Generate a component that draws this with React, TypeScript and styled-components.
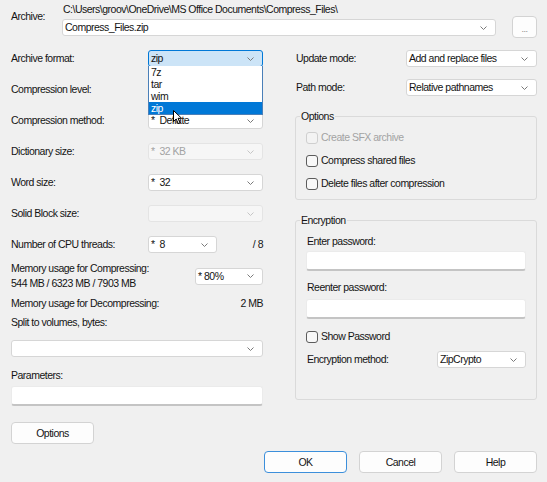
import React from "react";
import styled, { createGlobalStyle, css } from "styled-components";

const GlobalStyle = createGlobalStyle`
  html, body { margin: 0; padding: 0; background: #f0f0f0; }
  body {
    font-family: "Liberation Sans", Arial, sans-serif;
    font-size: 10.5px;
    letter-spacing: -0.5px;
    color: #141414;
  }
  * { box-sizing: border-box; }
`;

const Dialog = styled.div`
  width: 547px;
  height: 482px;
  padding: 3px 10px 0 11px;
  display: flex;
  flex-direction: column;
  overflow: hidden;
`;

/* ---------- generic controls ---------- */

const ComboBox = styled.div<{ $disabled?: boolean; $focused?: boolean; $width?: number }>`
  position: relative;
  display: flex;
  align-items: center;
  justify-content: space-between;
  height: 17px;
  width: ${(p) => (p.$width ? `${p.$width}px` : "100%")};
  padding: 0 8px 0 2px;
  background: #ffffff;
  border: 1px solid #d6d6d6;
  border-radius: 3px;
  line-height: 15px;
  white-space: pre;
  ${(p) =>
    p.$disabled &&
    css`
      background: #f6f6f6;
      border-color: #e4e4e4;
      color: #a3a3a3;
    `}
  ${(p) =>
    p.$focused &&
    css`
      background: #cce4f7;
      border-color: #0078d7;
    `}
`;

const ChevronSvg = styled.svg<{ $disabled?: boolean }>`
  flex: none;
  width: 7px;
  height: 4px;
  stroke: ${(p) => (p.$disabled ? "#c6c6c6" : "#7a7a7a")};
  fill: none;
`;

const Chevron = ({ disabled }: { disabled?: boolean }) => (
  <ChevronSvg $disabled={disabled} viewBox="0 0 7 4">
    <polyline points="0.5,0.5 3.5,3.5 6.5,0.5" strokeWidth="1" />
  </ChevronSvg>
);

type ComboProps = {
  value?: string;
  width?: number;
  disabled?: boolean;
  focused?: boolean;
  className?: string;
  children?: React.ReactNode;
};

const Combo = ({ value, width, disabled, focused, className, children }: ComboProps) => (
  <ComboBox className={className} $width={width} $disabled={disabled} $focused={focused}>
    <span>{value}</span>
    <Chevron disabled={disabled} />
    {children}
  </ComboBox>
);

const TextInput = styled.div`
  height: 20px;
  width: 100%;
  background: #ffffff;
  border: 1px solid #ebebeb;
  border-bottom: 2px solid #c4c4c4;
  border-radius: 3px;
`;

const Button = styled.button<{ $default?: boolean }>`
  width: 83px;
  height: 22px;
  padding: 0;
  font: inherit;
  letter-spacing: inherit;
  color: #141414;
  background: #fdfdfd;
  border: 1px solid #d3d3d3;
  border-radius: 4px;
  ${(p) =>
    p.$default &&
    css`
      border-color: #3c8fdb;
    `}
`;

const Label = styled.span<{ $muted?: boolean }>`
  line-height: 15px;
  white-space: nowrap;
  color: ${(p) => (p.$muted ? "#a3a3a3" : "inherit")};
`;

/* ---------- archive section ---------- */

const ArchiveGrid = styled.div`
  display: grid;
  grid-template-columns: 51px 434px 1fr;
  grid-template-rows: 13px 22px;
`;

const ArchiveLabel = styled(Label)`
  grid-row: 1 / span 2;
  grid-column: 1;
  align-self: start;
  margin-top: 6px;
`;

const PathText = styled.div`
  grid-row: 1;
  grid-column: 2;
  line-height: 13px;
  padding-left: 1px;
  white-space: nowrap;
`;

const ArchiveCombo = styled(Combo)`
  grid-row: 2;
  grid-column: 2;
  align-self: start;
  margin-top: 3px;
`;

const BrowseButton = styled(Button)`
  grid-row: 2;
  grid-column: 3;
  justify-self: end;
  width: 25px;
  height: 22px;
  color: #8a8a8a;
  font-size: 9px;
  padding-top: 3px;
`;

/* ---------- main area ---------- */

const Main = styled.div`
  display: flex;
  gap: 32px;
  margin-top: 12px;
`;

const LeftColumn = styled.div`
  width: 252px;
  display: flex;
  flex-direction: column;
`;

const RightColumn = styled.div`
  width: 242px;
  display: flex;
  flex-direction: column;
`;

const FormGrid = styled.div<{ $labelWidth: number; $gap: number }>`
  display: grid;
  grid-template-columns: ${(p) => p.$labelWidth}px 1fr;
  grid-auto-rows: 17px;
  row-gap: ${(p) => p.$gap}px;
  align-items: center;
`;

const RightLabel = styled(Label)`
  padding-left: 1px;
`;

const ThreadsCell = styled.div`
  display: flex;
  align-items: center;
  justify-content: space-between;
`;

const SpreadRow = styled.div<{ $top: number }>`
  display: flex;
  align-items: center;
  justify-content: space-between;
  margin-top: ${(p) => p.$top}px;
  line-height: 15px;
`;

const TwoLines = styled.div`
  display: flex;
  flex-direction: column;
  line-height: 15px;
  white-space: nowrap;
`;

const Spaced = styled.div<{ $top: number }>`
  margin-top: ${(p) => p.$top}px;
  display: flex;
  flex-direction: column;
`;

const FormatCell = styled.div`
  position: relative;
`;

const DropList = styled.ul`
  position: absolute;
  top: 100%;
  left: -1px;
  right: -1px;
  margin: 0;
  padding: 0;
  list-style: none;
  background: #ffffff;
  border: 1px solid #4a7fb8;
  border-top: none;
  z-index: 5;
  color: #141414;
`;

const DropItem = styled.li<{ $selected?: boolean }>`
  height: 12px;
  line-height: 12px;
  padding-left: 2px;
  ${(p) =>
    p.$selected &&
    css`
      background: #0078d7;
      color: #ffffff;
    `}
`;

const CursorSvg = styled.svg`
  position: absolute;
  left: 24px;
  top: 59px;
  width: 10px;
  height: 15px;
  z-index: 6;
`;

/* ---------- group boxes ---------- */

const GroupBox = styled.section<{ $top: number; $bottom: number }>`
  margin-top: ${(p) => p.$top}px;
  border: 1px solid #dadada;
  border-radius: 3px;
  padding: 0 10px ${(p) => p.$bottom}px;
  display: flex;
  flex-direction: column;
`;

const GroupTitle = styled.div`
  align-self: flex-start;
  margin: -7px 0 0 -6px;
  padding: 0 1px;
  line-height: 13px;
  background: #f0f0f0;
`;

const CheckList = styled.div`
  display: flex;
  flex-direction: column;
  gap: 8px;
  margin-top: 7px;
`;

const CheckRow = styled.label<{ $top?: number }>`
  display: flex;
  align-items: center;
  gap: 3px;
  height: 15px;
  margin-top: ${(p) => p.$top ?? 0}px;
`;

const CheckBox = styled.span<{ $disabled?: boolean }>`
  width: 12px;
  height: 12px;
  border-radius: 3px;
  border: 1px solid ${(p) => (p.$disabled ? "#cfcfcf" : "#5c5c5c")};
  background: ${(p) => (p.$disabled ? "#f3f3f3" : "#f8f8f8")};
`;

const FieldLabel = styled(Label)<{ $top: number }>`
  display: block;
  padding-left: 1px;
  margin-top: ${(p) => p.$top}px;
`;

const FieldInput = styled(TextInput)<{ $top: number }>`
  margin-top: ${(p) => p.$top}px;
`;

/* ---------- bottom ---------- */

const ButtonRow = styled.div`
  display: flex;
  justify-content: flex-end;
  gap: 12px;
  margin-top: 7px;
`;

const Check = ({ label, disabled, top }: { label: string; disabled?: boolean; top?: number }) => (
  <CheckRow $top={top}>
    <CheckBox $disabled={disabled} />
    <Label $muted={disabled}>{label}</Label>
  </CheckRow>
);

export default function App() {
  return (
    <>
      <GlobalStyle />
      <Dialog>
        <ArchiveGrid>
          <ArchiveLabel>Archive:</ArchiveLabel>
          <PathText>C:\Users\groov\OneDrive\MS Office Documents\Compress_Files\</PathText>
          <ArchiveCombo value="Compress_Files.zip" />
          <BrowseButton>...</BrowseButton>
        </ArchiveGrid>

        <Main>
          <LeftColumn>
            <FormGrid $labelWidth={137} $gap={14}>
              <Label>Archive format:</Label>
              <FormatCell>
                <Combo value="zip" focused>
                  <DropList>
                    <DropItem>7z</DropItem>
                    <DropItem>tar</DropItem>
                    <DropItem>wim</DropItem>
                    <DropItem $selected>zip</DropItem>
                  </DropList>
                  <CursorSvg viewBox="0 0 10 15">
                    <path
                      d="M0.5 0.5 L0.5 11.5 L3.2 9 L5.2 13.6 L7 12.8 L5 8.3 L8.6 8.3 Z"
                      fill="#ffffff"
                      stroke="#000000"
                      strokeWidth="1"
                      strokeLinejoin="round"
                    />
                  </CursorSvg>
                </Combo>
              </FormatCell>

              <Label>Compression level:</Label>
              <Combo value="" />

              <Label>Compression method:</Label>
              <Combo value="*  Deflate" />

              <Label>Dictionary size:</Label>
              <Combo value="*  32 KB" disabled />

              <Label>Word size:</Label>
              <Combo value="*  32" />

              <Label>Solid Block size:</Label>
              <Combo value="" disabled />

              <Label>Number of CPU threads:</Label>
              <ThreadsCell>
                <Combo value="*  8" width={69} />
                <Label>/ 8</Label>
              </ThreadsCell>
            </FormGrid>

            <SpreadRow $top={8}>
              <TwoLines>
                <span>Memory usage for Compressing:</span>
                <span>544 MB / 6323 MB / 7903 MB</span>
              </TwoLines>
              <Combo value="* 80%" width={68} />
            </SpreadRow>

            <SpreadRow $top={5}>
              <Label>Memory usage for Decompressing:</Label>
              <Label>2 MB</Label>
            </SpreadRow>

            <Spaced $top={4}>
              <Label>Split to volumes, bytes:</Label>
            </Spaced>
            <Spaced $top={10}>
              <Combo value="" />
            </Spaced>

            <Spaced $top={11}>
              <Label>Parameters:</Label>
            </Spaced>
            <Spaced $top={3}>
              <TextInput />
            </Spaced>

            <Spaced $top={16}>
              <Button>Options</Button>
            </Spaced>
          </LeftColumn>

          <RightColumn>
            <FormGrid $labelWidth={111} $gap={12}>
              <RightLabel>Update mode:</RightLabel>
              <Combo value="Add and replace files" />
              <RightLabel>Path mode:</RightLabel>
              <Combo value="Relative pathnames" />
            </FormGrid>

            <GroupBox $top={20} $bottom={8}>
              <GroupTitle>Options</GroupTitle>
              <CheckList>
                <Check label="Create SFX archive" disabled />
                <Check label="Compress shared files" />
                <Check label="Delete files after compression" />
              </CheckList>
            </GroupBox>

            <GroupBox $top={20} $bottom={31}>
              <GroupTitle>Encryption</GroupTitle>
              <FieldLabel $top={7}>Enter password:</FieldLabel>
              <FieldInput $top={2} />
              <FieldLabel $top={9}>Reenter password:</FieldLabel>
              <FieldInput $top={4} />
              <Check label="Show Password" top={10} />
              <SpreadRow $top={7}>
                <RightLabel>Encryption method:</RightLabel>
                <Combo value="ZipCrypto" width={89} />
              </SpreadRow>
            </GroupBox>
          </RightColumn>
        </Main>

        <ButtonRow>
          <Button $default>OK</Button>
          <Button>Cancel</Button>
          <Button>Help</Button>
        </ButtonRow>
      </Dialog>
    </>
  );
}
